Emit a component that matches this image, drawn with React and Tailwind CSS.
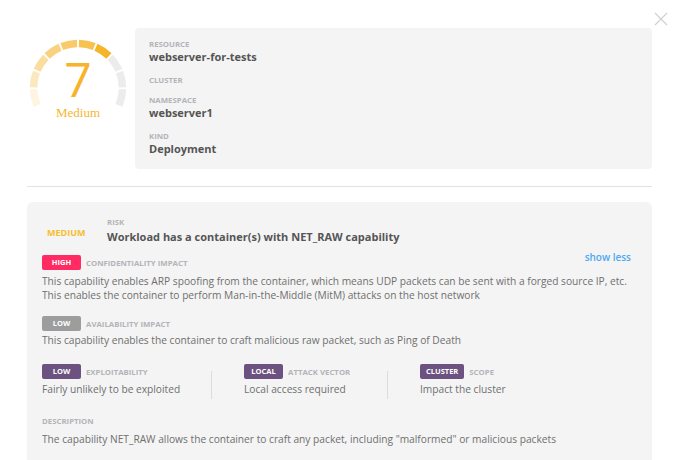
import React from "react";

const ORANGE = "#f5b42a";

const polar = (cx, cy, r, deg) => {
  const a = (deg * Math.PI) / 180;
  return [cx + r * Math.cos(a), cy - r * Math.sin(a)];
};

const Gauge = ({ score }) => {
  const segs = 10;
  const start = 203;
  const end = -23;
  const step = (start - end) / segs;
  const gap = 1.2;
  const opac = [0.15, 0.3, 0.45, 0.6, 0.7, 0.82, 1];
  const r = 44.5;
  return (
    <svg width="102" height="102" viewBox="0 0 102 102" className="absolute left-0 top-0">
      {Array.from({ length: segs }).map((_, i) => {
        const a1 = start - i * step - gap;
        const a2 = start - (i + 1) * step + gap;
        const [x1, y1] = polar(51, 51, r, i === 0 ? start : a1);
        const [x2, y2] = polar(51, 51, r, i === segs - 1 ? end : a2);
        const on = i < score;
        return (
          <path
            key={i}
            d={`M ${x1} ${y1} A ${r} ${r} 0 0 1 ${x2} ${y2}`}
            fill="none"
            stroke={on ? ORANGE : "#ececec"}
            strokeOpacity={on ? opac[i] : 1}
            strokeWidth="7.5"
          />
        );
      })}
    </svg>
  );
};

const Label = ({ children, className = "" }) => (
  <div className={`text-[7.8px] leading-[10px] font-bold uppercase text-[#b3b3b8] ${className}`}>
    {children}
  </div>
);

const Badge = ({ children, color }) => (
  <span
    className={`inline-flex h-[15px] min-w-[39px] items-center justify-center rounded-[2px] px-[6px] text-[7.5px] font-bold uppercase text-white ${color}`}
  >
    {children}
  </span>
);

const BadgeRow = ({ badge, color, label }) => (
  <div className="flex items-center gap-[5px]">
    <Badge color={color}>{badge}</Badge>
    <Label>{label}</Label>
  </div>
);

const Body = ({ children }) => (
  <p className="whitespace-nowrap text-[10.2px] leading-[14px] text-[#6f6f6f]">{children}</p>
);

export default function App() {
  return (
    <div
      className="relative h-[460px] w-[679px] overflow-hidden bg-white"
      style={{ fontFamily: '"Open Sans", "DejaVu Sans", sans-serif' }}
    >
      <svg width="14" height="14" viewBox="0 0 14 14" className="absolute left-[654px] top-[12px]">
        <path d="M1 1 L13 13 M13 1 L1 13" stroke="#d0d0d0" strokeWidth="1.1" />
      </svg>

      <div className="px-[27px] pt-[28px]">
        <div className="flex gap-[6px]">
          <div className="w-[102px]">
            <div className="relative mt-[9px] h-[102px] w-[102px]">
              <Gauge score={7} />
              <div className="absolute inset-0 flex flex-col items-center pt-[23px]">
                <div className="text-[48px] font-normal leading-[38px] text-[#f7b32b]">7</div>
                <div
                  className="mt-[7px] text-[13px] leading-[16px] text-[#f5b731]"
                  style={{ fontFamily: '"Liberation Serif", serif' }}
                >
                  Medium
                </div>
              </div>
            </div>
          </div>
          <div className="flex flex-1 flex-col gap-[10px] rounded-[4px] bg-[#f4f4f4] pb-[12px] pl-[14px] pt-[11px]">
            <div>
              <Label>Resource</Label>
              <div className="text-[11px] font-bold leading-[16px] text-[#555]">webserver-for-tests</div>
            </div>
            <div>
              <Label>Cluster</Label>
            </div>
            <div>
              <Label>Namespace</Label>
              <div className="text-[11px] font-bold leading-[16px] text-[#555]">webserver1</div>
            </div>
            <div>
              <Label>Kind</Label>
              <div className="text-[11px] font-bold leading-[16px] text-[#555]">Deployment</div>
            </div>
          </div>
        </div>

        <div className="mt-[17px] h-px bg-[#e2e2e2]" />

        <div className="mt-[15px] rounded-[6px] bg-[#f4f4f4] pb-[20px] pl-[15px] pr-[21px] pt-[15px]">
          <div className="flex items-start">
            <div className="mt-[9px] w-[65px] pl-[5px] text-[9px] font-bold leading-[14px] text-[#f8be2e]">
              MEDIUM
            </div>
            <div>
              <Label>Risk</Label>
              <div className="mt-[2px] text-[11px] font-bold leading-[16px] text-[#555]">
                Workload has a container(s) with NET_RAW capability
              </div>
            </div>
          </div>

          <div className="mt-[4px] flex justify-end">
            <span className="text-[10px] font-semibold leading-[16px] text-[#4ea8f2]">show less</span>
          </div>

          <div className="-mt-[10px]">
            <BadgeRow badge="High" color="bg-[#ff2b62]" label="Confidentiality impact" />
            <div className="mt-[4px]">
              <Body>
                This capability enables ARP spoofing from the container, which means UDP packets can be sent with a
                forged source IP, etc.
              </Body>
              <Body>This enables the container to perform Man-in-the-Middle (MitM) attacks on the host network</Body>
            </div>
          </div>

          <div className="mt-[14px]">
            <BadgeRow badge="Low" color="bg-[#9d9d9d]" label="Availability impact" />
            <div className="mt-[2px]">
              <Body>This capability enables the container to craft malicious raw packet, such as Ping of Death</Body>
            </div>
          </div>

          <div className="mt-[17px] flex items-start">
            <div className="w-[169px]">
              <BadgeRow badge="Low" color="bg-[#6c5280]" label="Exploitability" />
              <div className="mt-[3px]">
                <Body>Fairly unlikely to be exploited</Body>
              </div>
            </div>
            <div className="mt-[7px] h-[28px] w-px bg-[#dcdcdc]" />
            <div className="ml-[32px] w-[143px]">
              <BadgeRow badge="Local" color="bg-[#6c5280]" label="Attack vector" />
              <div className="mt-[3px]">
                <Body>Local access required</Body>
              </div>
            </div>
            <div className="mt-[7px] h-[28px] w-px bg-[#dcdcdc]" />
            <div className="ml-[32px]">
              <BadgeRow badge="Cluster" color="bg-[#6c5280]" label="Scope" />
              <div className="mt-[3px]">
                <Body>Impact the cluster</Body>
              </div>
            </div>
          </div>

          <div className="mt-[17px]">
            <Label>Description</Label>
            <div className="mt-[6px]">
              <Body>
                The capability NET_RAW allows the container to craft any packet, including "malformed" or malicious
                packets
              </Body>
            </div>
          </div>
        </div>
      </div>
    </div>
  );
}
